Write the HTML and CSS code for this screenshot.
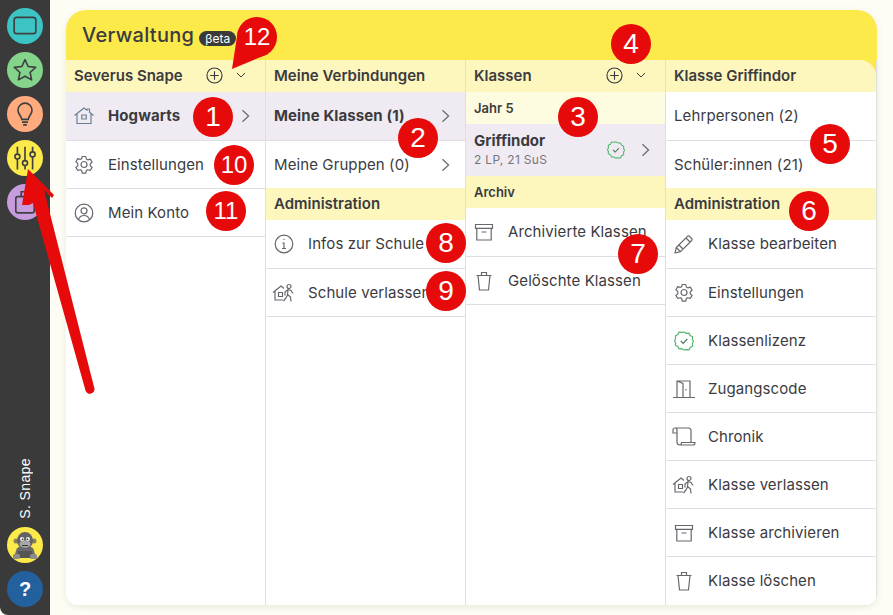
FILE: index.html
```html
<!DOCTYPE html>
<html lang="de">
<head>
<meta charset="utf-8">
<title>Verwaltung</title>
<link rel="stylesheet" href="styles.css">
</head>
<body>
<svg width="0" height="0" class="defs">
  <defs>
    <symbol id="i-gear" viewBox="0 0 20 20"><path d="M8.200 1.500h3.600l.5 2.500 1.600.9 2.400-.8 1.800 3.100-1.900 1.700v1.800l1.900 1.700-1.800 3.100-2.400-.8-1.600.9-.5 2.500H8.200l-.5-2.500-1.600-.9-2.400.8-1.800-3.100 1.900-1.700V8.400L1.900 6.700l1.800-3.100 2.400.8 1.600-.9z" stroke-linejoin="round"/><circle cx="10" cy="9.500" r="3"/></symbol>
    <symbol id="i-box" viewBox="0 0 20 20"><path d="M1.500 2.500h17v3.800h-17zM2.800 6.300V18h14.400V6.300M7.500 10h5"/></symbol>
    <symbol id="i-trash" viewBox="0 0 20 20"><path d="M2.500 4.500h15M7.500 4.500V1.500h5v3M4 4.500L5.500 19h9L16 4.500"/></symbol>
    <symbol id="i-leave" viewBox="0 0 24 20"><path d="M1 9.500L9 3l3 2.500M3 8v9h8M6.500 9.500h4v4h-4z"/><circle cx="17" cy="3.500" r="2"/><path d="M16 6.500l-3 2.500v3.500M16 6.500l3 1 2 3M16 6.500l-.5 5 3 2.500.5 4.500M15.500 12l-1.500 3-2.500 3"/></symbol>
    <symbol id="i-check" viewBox="0 0 20 20"><path d="M10 1l2.300 1.300 2.700-.1 1.200 2.400 2.400 1.200-.2 2.700L19.500 10l-1.100 2.500.2 2.700-2.400 1.200-1.200 2.400-2.700-.1L10 19l-2.300-1.300-2.700.1-1.200-2.400-2.400-1.200.2-2.700L.5 10l1.100-2.500-.2-2.700L3.800 3.600 5 1.200l2.700.1z" stroke="#52b66e"/><path d="M6.800 10l2.300 2.300 4.200-4.300" stroke="#4a7a5c"/></symbol>
    <symbol id="i-chev" viewBox="0 0 10 16"><path d="M1.500 1.500L8.500 8l-7 6.500"/></symbol>
    <symbol id="i-plus" viewBox="0 0 18 18"><circle cx="9" cy="9" r="8"/><path d="M9 4.500v9M4.500 9h9"/></symbol>
    <symbol id="i-down" viewBox="0 0 10 6"><path d="M1 1l4 4 4-4"/></symbol>
  </defs>
</svg>
<div class="app">
  <nav class="rail">
    <span class="dot dot-teal"><svg class="dot-ico" viewBox="0 0 24 24"><rect x="2" y="4" width="20" height="15" rx="2.500"/></svg></span>
    <span class="dot dot-green"><svg class="dot-ico" viewBox="0 0 24 24"><path d="M12 2.500l2.900 6.300 6.900.8-5.100 4.700 1.400 6.800-6.100-3.400-6.100 3.400 1.400-6.800-5.100-4.700 6.900-.8z" stroke-linejoin="round"/></svg></span>
    <span class="dot dot-orange"><svg class="dot-ico" viewBox="0 0 24 24"><path d="M9 17c0-3-3.500-4.500-3.500-8.500a6.500 6.500 0 0 1 13 0C18.500 12.500 15 14 15 17zM9.300 19.500h5.400M10.300 22h3.400"/></svg></span>
    <span class="dot dot-yellow"><svg class="dot-ico" viewBox="0 0 24 24"><path d="M5 1.500v7M5 13v9.500M12 1.500v13M12 19v3.500M19 1.500v5M19 11v11.500"/><circle cx="5" cy="10.700" r="2.300"/><circle cx="12" cy="16.700" r="2.300"/><circle cx="19" cy="8.700" r="2.300"/></svg></span>
    <span class="dot dot-purple"><svg class="dot-ico" viewBox="0 0 24 24"><rect x="3.500" y="7" width="17" height="15" rx="2"/><path d="M8.500 7V2.500h7V7"/></svg></span>
    <span class="rail-fill"></span>
    <span class="rail-name">S. Snape</span>
    <span class="dot dot-yellow dot-avatar">
      <svg class="avatar" viewBox="0 0 36 36">
        <circle cx="9" cy="14" r="2.500" fill="#85805f"/><circle cx="27" cy="14" r="2.500" fill="#85805f"/>
        <path d="M7 31l2.500-9c1-2 4-3 8.500-3s7.500 1 8.500 3l2.500 9z" fill="#6a6a6a"/>
        <path d="M11 24v7h14v-7z" fill="#555"/>
        <ellipse cx="18" cy="13.500" rx="8" ry="8.500" fill="#626262"/>
        <ellipse cx="18" cy="17" rx="5.500" ry="3.800" fill="#a8a8a8"/>
        <circle cx="15" cy="12" r="2" fill="#f0f0f0"/><circle cx="21" cy="12" r="2" fill="#f0f0f0"/>
        <circle cx="15.500" cy="12.300" r=".8" fill="#222"/><circle cx="20.500" cy="12.300" r=".8" fill="#222"/>
        <path d="M15 18.500h6" stroke="#333" fill="none"/>
        <rect x="6" y="27" width="7" height="5" rx="1.500" fill="#8c8c8c"/><rect x="23" y="27" width="7" height="5" rx="1.500" fill="#8c8c8c"/>
      </svg>
    </span>
    <span class="dot dot-blue">?</span>
  </nav>

  <main class="card">
    <header class="card-head">
      <h1 class="card-title">Verwaltung</h1>
      <span class="beta">βeta</span>
    </header>
    <div class="cols">
      <section class="col">
        <div class="sec sec-actions"><span>Severus Snape</span>
          <svg class="ico-plus"><use href="#i-plus"/></svg><svg class="ico-down"><use href="#i-down"/></svg></div>
        <div class="row row-active"><svg class="ico ico-home" viewBox="0 0 20 20"><path d="M0.500 9.500L10 2l3 2.400V3h2.500v3.300l4 3.200M3 8v9.500h14V8" stroke-linejoin="round"/><path d="M7.800 9h4.400v4H7.800z"/></svg><b class="label">Hogwarts</b><svg class="chev"><use href="#i-chev"/></svg></div>
        <div class="row"><svg class="ico"><use href="#i-gear"/></svg><span class="label">Einstellungen</span></div>
        <div class="row"><svg class="ico" viewBox="0 0 20 20"><circle cx="10" cy="10" r="8.800"/><circle cx="10" cy="7.800" r="3"/><path d="M4.500 16.500c1-3 3-4 5.500-4s4.500 1 5.500 4"/></svg><span class="label">Mein Konto</span></div>
      </section>

      <section class="col">
        <div class="sec"><span>Meine Verbindungen</span></div>
        <div class="row row-active"><b class="text">Meine Klassen (1)</b><svg class="chev"><use href="#i-chev"/></svg></div>
        <div class="row"><span class="text">Meine Gruppen (0)</span><svg class="chev"><use href="#i-chev"/></svg></div>
        <div class="sec"><span>Administration</span></div>
        <div class="row"><svg class="ico" viewBox="0 0 20 20"><circle cx="10" cy="10" r="8.800"/><path d="M10 5v1M8.300 9H10v5.500M8 14.500h4"/></svg><span class="label">Infos zur Schule</span></div>
        <div class="row"><svg class="ico ico-wide"><use href="#i-leave"/></svg><span class="label">Schule verlassen</span></div>
      </section>

      <section class="col">
        <div class="sec sec-actions"><span>Klassen</span>
          <svg class="ico-plus"><use href="#i-plus"/></svg><svg class="ico-down"><use href="#i-down"/></svg></div>
        <div class="sub sub-light">Jahr 5</div>
        <div class="row row-active row-tall">
          <div class="two"><b class="two-a">Griffindor</b><span class="two-b">2 LP, 21 SuS</span></div>
          <svg class="ico-check"><use href="#i-check"/></svg><svg class="chev chev-near"><use href="#i-chev"/></svg>
        </div>
        <div class="sub">Archiv</div>
        <div class="row"><svg class="ico"><use href="#i-box"/></svg><span class="label">Archivierte Klassen</span></div>
        <div class="row"><svg class="ico"><use href="#i-trash"/></svg><span class="label">Gelöschte Klassen</span></div>
      </section>

      <section class="col col-last">
        <div class="sec sec-round"><span>Klasse Griffindor</span></div>
        <div class="row"><span class="text">Lehrpersonen (2)</span></div>
        <div class="row"><span class="text">Schüler:innen (21)</span></div>
        <div class="sec"><span>Administration</span></div>
        <div class="row"><svg class="ico" viewBox="0 0 20 20"><path d="M1 19l1.300-5.500L13.500 2.300a1.500 1.500 0 0 1 2 0l2.200 2.200a1.500 1.500 0 0 1 0 2L6.500 17.700zM2.300 13.500l4.200 4.200M12 4l4 4M5 11l4 4" stroke-linejoin="round"/></svg><span class="label">Klasse bearbeiten</span></div>
        <div class="row"><svg class="ico"><use href="#i-gear"/></svg><span class="label">Einstellungen</span></div>
        <div class="row"><svg class="ico ico-plain"><use href="#i-check"/></svg><span class="label">Klassenlizenz</span></div>
        <div class="row"><svg class="ico ico-wide" viewBox="0 0 24 20"><path d="M1 18.500h22M5 18.500V2h13v16.500M5 2l6 2.500v14M14 10v1.500"/></svg><span class="label">Zugangscode</span></div>
        <div class="row"><svg class="ico ico-wide" viewBox="0 0 24 20"><path d="M1 4.500V3a2 2 0 0 1 4 0v12a3 3 0 0 0 3 3h13c1.500 0 2-1 2-2.500H9.500c0 1.500-.5 2.500-1.500 2.500M1 4.500v1.500h4M3 1h13.500A2.500 2.500 0 0 1 19 3.500v12"/></svg><span class="label">Chronik</span></div>
        <div class="row"><svg class="ico ico-wide"><use href="#i-leave"/></svg><span class="label">Klasse verlassen</span></div>
        <div class="row"><svg class="ico"><use href="#i-box"/></svg><span class="label">Klasse archivieren</span></div>
        <div class="row row-end"><svg class="ico"><use href="#i-trash"/></svg><span class="label">Klasse löschen</span></div>
      </section>
    </div>
  </main>
</div>

<svg class="arrow" width="893" height="615" viewBox="0 0 893 615">
  <path d="M28 169L54 195 52 198 44 190 94.300 388a4.500 4.500 0 0 1-8.800 2.400L33 203 29 205 22 205z" fill="#e60a0a"/>
  <path d="M238 30L232 69 268 54z" fill="#e60a0a"/>
</svg>
<span class="pin pin-1">1</span>
<span class="pin pin-2">2</span>
<span class="pin pin-3">3</span>
<span class="pin pin-4">4</span>
<span class="pin pin-5">5</span>
<span class="pin pin-6">6</span>
<span class="pin pin-7">7</span>
<span class="pin pin-8">8</span>
<span class="pin pin-9">9</span>
<span class="pin pin-small pin-10">10</span>
<span class="pin pin-small pin-11">11</span>
<span class="pin pin-small pin-12">12</span>
</body>
</html>
```

FILE: styles.css
```css
* { box-sizing: border-box; }
html, body { margin: 0; height: 100%; overflow: hidden; }
body {
  background: #fdfdf5;
  color: #3b3b3f;
  font-family: Inter, "Liberation Sans", sans-serif;
  font-size: 15px;
}
.defs { position: absolute; }

.app { display: flex; height: 615px; }

.rail {
  width: 50px;
  flex: none;
  background: #3a3a3a;
  border-bottom-left-radius: 8px;
  display: flex;
  flex-direction: column;
  align-items: center;
  gap: 8px;
  padding: 8px 0;
}
.rail-fill { flex: 1; }
.rail-name {
  writing-mode: vertical-rl;
  transform: rotate(180deg);
  color: #fff;
  font-family: "Liberation Sans", sans-serif;
  font-size: 14px;
  letter-spacing: .4px;
}
.dot {
  width: 36px;
  height: 36px;
  border-radius: 50%;
  flex: none;
  display: flex;
  align-items: center;
  justify-content: center;
}
.dot-ico { width: 26px; height: 26px; fill: none; stroke: #3f3f42; stroke-width: 1.500; }
.dot-teal { background: #3cc4c4; }
.dot-green { background: #84d48c; }
.dot-orange { background: #ffab7d; }
.dot-yellow { background: #fce94a; }
.dot-purple { background: #c79cdc; }
.dot-blue {
  background: #23619e;
  color: #fff;
  font-family: "Liberation Sans", sans-serif;
  font-weight: 700;
  font-size: 20px;
}
.dot-avatar { overflow: hidden; }
.avatar { width: 36px; height: 36px; }

.card {
  margin: 10px 16px;
  flex: 1;
  min-width: 0;
  border-radius: 20px 20px 12px 12px;
  background: #fff;
  box-shadow: 0 2px 6px rgba(90, 90, 60, .12);
  overflow: hidden;
  display: flex;
  flex-direction: column;
}
.card-head {
  height: 50px;
  flex: none;
  background: #fce94a;
  display: flex;
  align-items: center;
  gap: 5px;
  padding: 0 0 0 16px;
}
.card-title { margin: 0; font-size: 20px; font-weight: 500; letter-spacing: .3px; color: #3b3b3f; }
.beta {
  background: #3a3a3a;
  color: #fff;
  border-radius: 8px;
  font-size: 12px;
  line-height: 15px;
  padding: 0 6px;
  margin-top: 6px;
}

.cols {
  flex: 1;
  display: grid;
  grid-template-columns: 200px 200px 200px 1fr;
  min-height: 0;
}
.col { background: #fff; border-right: 1px solid #dfdfe2; }
.col-last { background: linear-gradient(#fce94a 16px, #fff 16px); }

.sec {
  height: 32px;
  background: #fdf6bd;
  display: flex;
  align-items: center;
  padding: 0 8px 2px;
  font-weight: 600;
  font-size: 15px;
}
.sec > span { flex: 1; }
.sec-round { border-radius: 0 16px 0 0; }
.ico-plus { width: 17px; height: 17px; fill: none; stroke: #3b3b3f; stroke-width: 1.200; margin-right: 13px; }
.ico-down { width: 10px; height: 6px; fill: none; stroke: #3b3b3f; stroke-width: 1; margin-right: 11px; }

.sub {
  height: 32px;
  background: #fdf6bd;
  display: flex;
  align-items: center;
  padding: 0 8px;
  font-weight: 600;
  font-size: 13px;
}
.sub-light { background: #fefce0; }

.row {
  height: 48px;
  display: flex;
  align-items: center;
  padding: 0 8px;
  border-bottom: 1px solid #dfdfe2;
  background: #fff;
}
.sec + .row, .sub + .row { height: 49px; padding-bottom: 1px; }
.row + .sec { margin-top: -1px; }
.sub + .row-tall { height: 52px; border-bottom: 0; }
.row-end { border-bottom: 0; padding-bottom: 1px; }
.row-active { background: #f0ebf3; }
.ico {
  width: 20px;
  height: 20px;
  flex: none;
  margin-right: 14px;
  fill: none;
  stroke: #66686e;
  stroke-width: 1.200;
  overflow: visible;
}
.ico-wide { width: 24px; margin-left: -2px; margin-right: 12px; }
.ico-home { stroke: #6a7f95; }
.label, .text { flex: 1; letter-spacing: .1px; white-space: nowrap; font-weight: 400; }
b.label, b.text { font-weight: 700; }
.chev { width: 9px; height: 14px; flex: none; fill: none; stroke: #6c6e75; stroke-width: 1.500; margin-right: 7px; }
.chev-near { margin-left: 16px; }

.two { flex: 1; display: flex; flex-direction: column; gap: 2px; }
.two-a { font-weight: 700; font-size: 15px; line-height: 18px; }
.two-b { font-size: 12px; line-height: 15px; color: #74767c; letter-spacing: .3px; }
.ico-check { width: 18px; height: 18px; fill: none; stroke-width: 1.200; }

.arrow { position: absolute; left: 0; top: 0; pointer-events: none; }
.pin {
  position: absolute;
  width: 40px;
  height: 40px;
  border-radius: 50%;
  background: #e60a0a;
  color: #fff;
  font-family: "Liberation Sans", sans-serif;
  font-size: 28px;
  line-height: 40px;
  text-align: center;
}
.pin-small { font-size: 24px; }
.pin-1 { left: 193px; top: 97px; }
.pin-2 { left: 398px; top: 118px; }
.pin-3 { left: 558px; top: 97px; }
.pin-4 { left: 611px; top: 24px; }
.pin-5 { left: 810px; top: 124px; }
.pin-6 { left: 789px; top: 191px; }
.pin-7 { left: 618px; top: 234px; }
.pin-8 { left: 426px; top: 223px; }
.pin-9 { left: 426px; top: 271px; }
.pin-10 { left: 214px; top: 145px; }
.pin-11 { left: 206px; top: 191px; }
.pin-12 { left: 237px; top: 17px; }
```
